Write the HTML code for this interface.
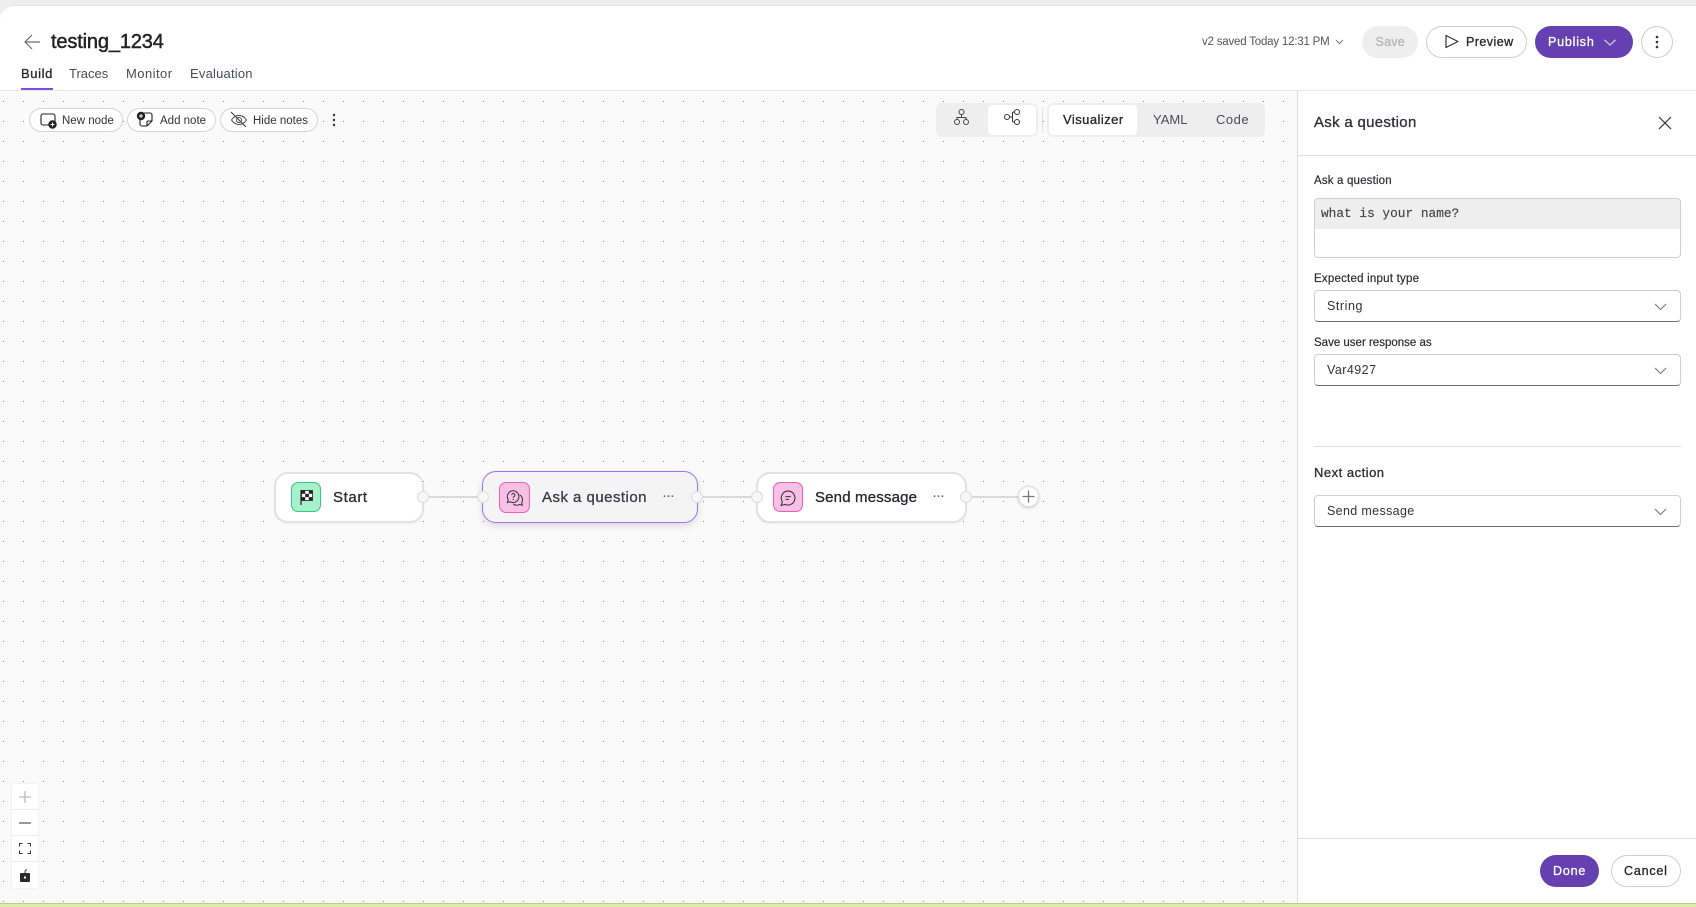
<!DOCTYPE html>
<html><head><meta charset="utf-8"><title>testing_1234</title>
<style>
*{box-sizing:border-box}
html,body{margin:0;padding:0;width:1696px;height:907px;overflow:hidden;background:#fff;font-family:"Liberation Sans",sans-serif;color:#26262b}
.a{position:absolute}
.t{position:absolute;white-space:nowrap;line-height:20px;height:20px}
.m{-webkit-text-stroke:.3px currentColor}
svg{position:absolute;overflow:visible;fill:none}
.pill{position:absolute;border:1px solid #d4d4d4;border-radius:13px;background:#fff}
.btn{position:absolute;border-radius:17px;height:32px;top:26px}
.sel{position:absolute;left:1314px;width:367px;background:#fff;border:1px solid #d0d0d0;border-bottom:1px solid #6f6f6f;border-radius:4px}
.port{position:absolute;width:12px;height:12px;border-radius:50%;background:#f7f7f7;border:1px solid #dcdcdc}
.line{position:absolute;height:2px;background:#d9d9d9;top:496px}
.node{position:absolute;background:#fff;border:2px solid #e2e2e2;border-radius:14px;box-shadow:0 1px 2px rgba(0,0,0,.06)}
.ic{position:absolute;width:30px;height:30px;border-radius:7px;top:482px}
.z{position:absolute;left:12px;width:26px;background:#fff}
.lb{font-size:11.5px;color:#2c2c33;-webkit-text-stroke:.2px currentColor}
</style></head><body>

<div class="a" style="left:0;top:0;width:1696px;height:6px;background:#eeeeee;border-bottom:1px solid #e2e2e2"></div>
<div class="a" style="left:0;top:5px;width:14px;height:14px;background:#eee"></div>
<div class="a" style="left:0;top:5px;width:1696px;height:86px;background:#fff;border-top:1px solid #e4e4e4;border-bottom:1px solid #e8e8e8;border-top-left-radius:14px"></div>

<!-- canvas -->
<div class="a" style="left:0;top:91px;width:1297px;height:812px;background:#fafafa"></div>
<svg style="left:0;top:91px;overflow:hidden" width="1297" height="812"><defs><pattern id="d" x="3" y="10" width="20" height="20" patternUnits="userSpaceOnUse"><rect width="1" height="1" fill="#8c8c8c"/></pattern></defs><rect width="1297" height="812" fill="url(#d)"/></svg>

<!-- header -->
<svg style="left:24px;top:34px" width="17" height="16" viewBox="0 0 17 16"><path d="M16 8H1.200M8 1L1 8l7 7" stroke="#6e6e6e" stroke-width="1.200"/></svg>
<div class="t" style="left:51px;top:32px;font-size:20px;color:#222;letter-spacing:-.15px;-webkit-text-stroke:.45px currentColor">testing_1234</div>
<div class="t m" style="left:21px;top:64px;font-size:13px;color:#26262b;letter-spacing:.6px">Build</div>
<div class="t" style="left:69px;top:64px;font-size:13px;color:#4a4a55">Traces</div>
<div class="t" style="left:126px;top:64px;font-size:13px;color:#4a4a55;letter-spacing:.45px">Monitor</div>
<div class="t" style="left:190px;top:64px;font-size:13px;color:#4a4a55;letter-spacing:.2px">Evaluation</div>
<div class="a" style="left:21px;top:88px;width:32px;height:2px;background:#7c4fe0"></div>

<div class="t" style="left:1202px;top:32px;font-size:11.5px;color:#555;letter-spacing:-.2px">v2 saved Today 12:31 PM</div>
<svg style="left:1335px;top:39px" width="9" height="6" viewBox="0 0 9 6"><path d="M1 1l3.500 3.500L8 1" stroke="#777" stroke-width="1"/></svg>
<div class="btn" style="left:1362px;width:56px;background:#eeeeee"></div>
<div class="t m" style="left:1375.500px;top:32px;font-size:12.500px;color:#b5b5b5;letter-spacing:.25px">Save</div>
<div class="btn" style="left:1426px;width:101px;background:#fff;border:1px solid #cfcfcf"></div>
<svg style="left:1443.500px;top:34px" width="15" height="15" viewBox="0 0 15 15"><path d="M2 1.500L14 7.500 2 13.500z" stroke="#333" stroke-width="1.200" stroke-linejoin="round"/></svg>
<div class="t m" style="left:1466px;top:32px;font-size:12.500px;color:#26262b;letter-spacing:.45px">Preview</div>
<div class="btn" style="left:1535px;width:98px;background:#6440b0"></div>
<div class="t m" style="left:1548px;top:32px;font-size:12.500px;color:#fff;letter-spacing:.8px">Publish</div>
<svg style="left:1604px;top:39px" width="12" height="7" viewBox="0 0 12 7"><path d="M.5 .8L6 6l5.500-5.200" stroke="#ddd" stroke-width="1.100"/></svg>
<div class="btn" style="left:1641px;width:32px;background:#fff;border:1px solid #cfcfcf"></div>
<svg style="left:1655px;top:35px" width="4" height="14" viewBox="0 0 4 14"><g fill="#333"><circle cx="2" cy="2" r="1.300"/><circle cx="2" cy="7" r="1.300"/><circle cx="2" cy="12" r="1.300"/></g></svg>

<!-- toolbar -->
<div class="pill" style="left:29px;top:108px;width:94px;height:24px"></div>
<svg style="left:40px;top:113px" width="18" height="16" viewBox="0 0 18 16"><rect x="1" y="1" width="14" height="11" rx="2" stroke="#222" stroke-width="1.100"/><circle cx="12.500" cy="11.500" r="4.200" fill="#222"/><path d="M12.500 9.500v4M10.500 11.500h4" stroke="#fff" stroke-width="1"/></svg>
<div class="t" style="left:62px;top:111px;font-size:11.500px;color:#333">New node</div>
<div class="pill" style="left:127px;top:108px;width:89px;height:24px"></div>
<svg style="left:136px;top:111px" width="18" height="17" viewBox="0 0 18 17"><path d="M7 2h7a2 2 0 012 2v6l-5 5H6a2 2 0 01-2-2V8" stroke="#222" stroke-width="1.100"/><path d="M16 10h-4a1 1 0 00-1 1v4" stroke="#222" stroke-width="1.100"/><circle cx="5" cy="5" r="4.200" fill="#222"/><path d="M5 3v4M3 5h4" stroke="#fff" stroke-width="1"/></svg>
<div class="t" style="left:160px;top:111px;font-size:11.500px;color:#333">Add note</div>
<div class="pill" style="left:220px;top:108px;width:98px;height:24px"></div>
<svg style="left:230px;top:111px" width="18" height="17" viewBox="0 0 18 17"><path d="M1 1l15 15" stroke="#333" stroke-width="1"/><path d="M1.500 9C3.500 6 6 4.500 9 4.500s5.500 1.500 7.500 4.500c-2 3-4.500 4.500-7.500 4.500S3.500 12 1.500 9z" stroke="#444" stroke-width="1"/><circle cx="9" cy="9" r="2.500" stroke="#444"/></svg>
<div class="t" style="left:253px;top:111px;font-size:11.500px;color:#333">Hide notes</div>
<svg style="left:332px;top:113px" width="4" height="14" viewBox="0 0 4 14"><g fill="#333"><circle cx="2" cy="2" r="1.200"/><circle cx="2" cy="7" r="1.200"/><circle cx="2" cy="12" r="1.200"/></g></svg>

<div class="a" style="left:936px;top:103px;width:102px;height:34px;background:#eeeeee;border-radius:6px"></div>
<div class="a" style="left:988px;top:105px;width:48px;height:30px;background:#fff;border-radius:4px"></div>
<svg style="left:954px;top:109px" width="15" height="16" viewBox="0 0 15 16"><g stroke="#444" stroke-width="1"><circle cx="7.500" cy="3" r="2.500"/><circle cx="3" cy="13" r="2.500"/><circle cx="12" cy="13" r="2.500"/><path d="M7.500 5.500v3M3 10.500V8.500h9v2"/></g></svg>
<svg style="left:1004px;top:109px" width="16" height="16" viewBox="0 0 16 16"><g stroke="#333" stroke-width="1"><circle cx="3" cy="8" r="2.500"/><circle cx="13" cy="3" r="2.500"/><circle cx="13" cy="13" r="2.500"/><path d="M5.500 8H8M10.500 3H9.500a1 1 0 00-1 1v8a1 1 0 001 1h1"/></g></svg>
<div class="a" style="left:1042px;top:107px;width:1px;height:26px;background:#e2e2e2"></div>
<div class="a" style="left:1047px;top:103px;width:218px;height:34px;background:#eeeeee;border-radius:6px"></div>
<div class="a" style="left:1049px;top:105px;width:88px;height:30px;background:#fff;border-radius:4px"></div>
<div class="t m" style="left:1063px;top:110px;font-size:13px;color:#26262b;letter-spacing:.45px">Visualizer</div>
<div class="t" style="left:1153px;top:110px;font-size:13px;color:#4a4a55">YAML</div>
<div class="t" style="left:1216px;top:110px;font-size:13px;color:#4a4a55;letter-spacing:.5px">Code</div>

<!-- flow -->
<div class="line" style="left:429px;width:50px"></div>
<div class="line" style="left:703px;width:50px"></div>
<div class="line" style="left:972px;width:48px"></div>

<div class="node" style="left:274px;top:472px;width:150px;height:51px"></div>
<div class="ic" style="left:291px;background:#a8f0cc;border:1px solid #2ecc80"></div>
<svg style="left:300px;top:490px" width="13" height="15" viewBox="0 0 13 15"><path d="M1 0v15" stroke="#222" stroke-width="1.200"/><rect x="1.500" y=".5" width="11" height="10" fill="#fff" stroke="#222" stroke-width=".8"/><g fill="#222"><rect x="1.500" y=".5" width="3.700" height="3.300"/><rect x="8.800" y=".5" width="3.700" height="3.300"/><rect x="5.200" y="3.800" width="3.700" height="3.300"/><rect x="1.500" y="7.100" width="3.700" height="3.300"/><rect x="8.800" y="7.100" width="3.700" height="3.300"/></g></svg>
<div class="t m" style="left:333px;top:487.500px;font-size:15px;color:#2c2c33;letter-spacing:.6px">Start</div>
<div class="port" style="left:417px;top:491px"></div>

<div class="node" style="left:482px;top:471px;width:216px;height:52px;background:#f4f4f4;border:1.500px solid #9b74ea;box-shadow:0 3px 8px rgba(0,0,0,.13)"></div>
<div class="ic" style="left:499px;width:31px;height:31px;background:#f8c0e4;border:1px solid #ec5fb4"></div>
<svg style="left:505.500px;top:488.500px" width="18" height="18" viewBox="0 0 20 20"><path d="M8 2a6.500 6.500 0 00-5.500 10L1.500 15l3.200-.8A6.500 6.500 0 108 2z" stroke="#333" stroke-width="1.100"/><path d="M15 6.500a6 6 0 012.500 8.500l.7 3-3-.8a6 6 0 01-7.200-.7" stroke="#333" stroke-width="1.100"/><path d="M6.300 6.800a1.800 1.800 0 113 1.300c-.7.500-1.300.9-1.300 1.700" stroke="#333" stroke-width="1.100"/><circle cx="8" cy="11.700" r=".7" fill="#333"/></svg>
<div class="t m" style="left:542px;top:487.500px;font-size:15px;color:#3a3a40;letter-spacing:.47px">Ask a question</div>
<div class="t" style="left:663px;top:487px;font-size:11px;color:#666;font-weight:bold;letter-spacing:.3px">···</div>
<div class="port" style="left:477px;top:491px"></div>
<div class="port" style="left:691px;top:491px"></div>

<div class="node" style="left:756px;top:472px;width:211px;height:51px"></div>
<div class="ic" style="left:773px;background:#f8c0e4;border:1px solid #ec5fb4"></div>
<svg style="left:780px;top:489.500px" width="16" height="16" viewBox="0 0 17 17"><path d="M8.500 1a7.500 7.500 0 11-3.300 14.300L1.200 16.500l1.300-4A7.500 7.500 0 018.500 1z" stroke="#333" stroke-width="1.100"/><path d="M5.800 7h5.700M5.800 10h3.800" stroke="#333" stroke-width="1.100"/></svg>
<div class="t m" style="left:815px;top:487.500px;font-size:15px;color:#26262b;letter-spacing:.17px">Send message</div>
<div class="t" style="left:933px;top:487px;font-size:11px;color:#666;font-weight:bold;letter-spacing:.3px">···</div>
<div class="port" style="left:751px;top:491px"></div>
<div class="port" style="left:960px;top:491px"></div>
<div class="a" style="left:1018px;top:486px;width:21px;height:21px;border-radius:50%;background:#fff;border:1px solid #dcdcdc;box-shadow:0 1px 3px rgba(0,0,0,.2)"></div>
<svg style="left:1022px;top:490px" width="13" height="13" viewBox="0 0 13 13"><path d="M6.500 .5v12M.5 6.500h12" stroke="#777" stroke-width="1.300"/></svg>

<!-- zoom -->
<div class="a" style="left:12px;top:784px;width:26px;height:104px;background:#ececec;box-shadow:0 0 2px rgba(0,0,0,.1)"></div>
<div class="z" style="top:784px;height:25px"></div>
<div class="z" style="top:810px;height:25px"></div>
<div class="z" style="top:836px;height:25px"></div>
<div class="z" style="top:862px;height:26px"></div>
<svg style="left:19px;top:791px" width="12" height="12" viewBox="0 0 12 12"><path d="M6 0v12M0 6h12" stroke="#bdbdbd" stroke-width="1.300"/></svg>
<svg style="left:19px;top:822px" width="12" height="2" viewBox="0 0 12 2"><path d="M0 1h12" stroke="#333" stroke-width="1"/></svg>
<svg style="left:19px;top:843px" width="12" height="11" viewBox="0 0 12 11"><path d="M.5 3.500V.5h3M8.500 .5h3v3M11.500 7.500v3h-3M3.500 10.500h-3v-3" stroke="#333" stroke-width="1"/></svg>
<svg style="left:20px;top:869px" width="10" height="13" viewBox="0 0 10 13"><path d="M5 4.500V2.500A1.800 1.800 0 017 .8" stroke="#333"/><rect x="0" y="4" width="10" height="9" rx="1" fill="#2b2b2b"/><rect x="4" y="7.500" width="2" height="2" fill="#fff"/></svg>

<!-- panel -->
<div class="a" style="left:1297px;top:91px;width:399px;height:812px;background:#fff;border-left:1px solid #dedede"></div>
<div class="a" style="left:1298px;top:155px;width:398px;height:1px;background:#e2e2e2"></div>
<div class="t m" style="left:1314px;top:113px;font-size:15px;color:#2c2c33;letter-spacing:.3px">Ask a question</div>
<svg style="left:1658px;top:116px" width="14" height="14" viewBox="0 0 14 14"><path d="M1 1l12 12M13 1L1 13" stroke="#333" stroke-width="1.200"/></svg>

<div class="t lb" style="left:1314px;top:170.500px;letter-spacing:.17px">Ask a question</div>
<div class="a" style="left:1314px;top:198px;width:367px;height:60px;background:#fff;border:1px solid #cfcfcf;border-radius:4px;overflow:hidden"><div style="height:30px;background:#eeeeee"></div></div>
<div class="t" style="left:1321px;top:204px;font-family:'Liberation Mono',monospace;font-size:12.800px;color:#444;-webkit-text-stroke:.15px currentColor">what is your name?</div>

<div class="t lb" style="left:1314px;top:268.500px;letter-spacing:.22px">Expected input type</div>
<div class="sel" style="top:290px;height:32px"></div>
<div class="t" style="left:1327px;top:296px;font-size:12.500px;color:#333;letter-spacing:.55px">String</div>
<svg style="left:1654px;top:303px" width="13" height="8" viewBox="0 0 13 8"><path d="M1 1l5.500 5.500L12 1" stroke="#777" stroke-width="1.100"/></svg>

<div class="t lb" style="left:1314px;top:332.500px">Save user response as</div>
<div class="sel" style="top:354px;height:32px"></div>
<div class="t" style="left:1327px;top:360px;font-size:12.500px;color:#333;letter-spacing:.45px">Var4927</div>
<svg style="left:1654px;top:367px" width="13" height="8" viewBox="0 0 13 8"><path d="M1 1l5.500 5.500L12 1" stroke="#777" stroke-width="1.100"/></svg>

<div class="a" style="left:1314px;top:446px;width:367px;height:1px;background:#e2e2e2"></div>
<div class="t m" style="left:1314px;top:463px;font-size:13px;color:#2c2c33;letter-spacing:.5px">Next action</div>
<div class="sel" style="top:495px;height:32px"></div>
<div class="t" style="left:1327px;top:501px;font-size:12.500px;color:#333;letter-spacing:.35px">Send message</div>
<svg style="left:1654px;top:508px" width="13" height="8" viewBox="0 0 13 8"><path d="M1 1l5.500 5.500L12 1" stroke="#777" stroke-width="1.100"/></svg>

<div class="a" style="left:1298px;top:838px;width:398px;height:1px;background:#e2e2e2"></div>
<div class="btn" style="left:1540px;top:855px;width:59px;background:#6440b0"></div>
<div class="t m" style="left:1553px;top:861px;font-size:12.500px;color:#fff;letter-spacing:.8px">Done</div>
<div class="btn" style="left:1611px;top:855px;width:70px;background:#fff;border:1px solid #cfcfcf"></div>
<div class="t m" style="left:1624px;top:861px;font-size:12.500px;color:#26262b;letter-spacing:.8px">Cancel</div>

<!-- bottom strip -->
<div class="a" style="left:0;top:903px;width:1696px;height:4px;background:#dcedaa;border-top:1px solid #b9c994"></div>
</body></html>
